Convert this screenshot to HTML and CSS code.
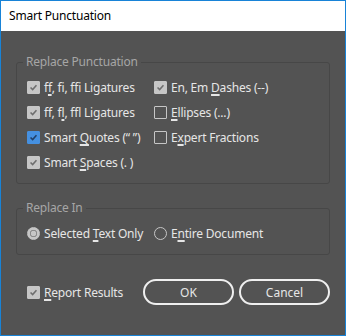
FILE: index.html
```html
<!DOCTYPE html>
<html lang="en">
<head>
  <meta charset="UTF-8" />
  <title>Smart Punctuation</title>
  <link rel="stylesheet" href="styles.css">
</head>
<body>
  <div class="window">
    <div class="titlebar">Smart Punctuation</div>
    <div class="content">
      <fieldset class="group">
        <legend>Replace Punctuation</legend>
        <div class="opts">
          <div class="opt"><span class="box on"><svg viewBox="0 0 13 13"><path d="M3 6.5 L5.5 9 L10 3.8"/></svg></span><span>f<u>f</u>, fi, ffi Ligatures</span></div>
          <div class="opt"><span class="box on"><svg viewBox="0 0 13 13"><path d="M3 6.5 L5.5 9 L10 3.8"/></svg></span><span>En, Em <u>D</u>ashes (--)</span></div>
          <div class="opt"><span class="box on"><svg viewBox="0 0 13 13"><path d="M3 6.5 L5.5 9 L10 3.8"/></svg></span><span>ff, f<u>l</u>, ffl Ligatures</span></div>
          <div class="opt"><span class="box"></span><span><u>E</u>llipses (...)</span></div>
          <div class="opt"><span class="box blue"><svg viewBox="0 0 13 13"><path d="M3 6.5 L5.5 9 L10 3.8"/></svg></span><span>Smart <u>Q</u>uotes (“ ”)</span></div>
          <div class="opt"><span class="box"></span><span>E<u>x</u>pert Fractions</span></div>
          <div class="opt"><span class="box on"><svg viewBox="0 0 13 13"><path d="M3 6.5 L5.5 9 L10 3.8"/></svg></span><span>Smart <u>S</u>paces (. )</span></div>
        </div>
      </fieldset>

      <fieldset class="group">
        <legend>Replace In</legend>
        <div class="opts radios">
          <div class="opt"><span class="radio sel"></span><span>Selected <u>T</u>ext Only</span></div>
          <div class="opt"><span class="radio"></span><span>E<u>n</u>tire Document</span></div>
        </div>
      </fieldset>

      <div class="footer">
        <div class="opt"><span class="box on"><svg viewBox="0 0 13 13"><path d="M3 6.5 L5.5 9 L10 3.8"/></svg></span><span><u>R</u>eport Results</span></div>
        <div class="buttons">
          <button class="btn">OK</button>
          <button class="btn">Cancel</button>
        </div>
      </div>
    </div>
  </div>
</body>
</html>
```

FILE: styles.css
```css
body {
  margin: 0;
  font-family: "Noto Sans", "Open Sans", sans-serif;
  font-size: 12px;
  letter-spacing: -0.2px;
}
.window {
  width: 346px;
  height: 336px;
  box-sizing: border-box;
  border: 1px solid #1883d7;
  background: #535353;
  display: flex;
  flex-direction: column;
}
.titlebar {
  height: 30px;
  background: #fff;
  color: #000;
  line-height: 30px;
  padding-left: 8px;
}
.content {
  padding: 23px 15px 0;
  color: #e6e6e6;
}
.group {
  margin: 0 0 16px;
  border: 1px solid #474747;
  border-radius: 3px;
  padding: 5px 10px 8px;
}
.group legend {
  color: #a6a6a6;
  padding: 0 3px;
  margin-left: -4px;
  line-height: 16px;
}
.opts {
  display: grid;
  grid-template-columns: 127px auto;
  grid-auto-rows: 25px;
}
.opt {
  display: flex;
  align-items: center;
  white-space: nowrap;
}
.opt u {
  text-decoration-thickness: 2px;
  text-underline-offset: 2px;
}
.box, .radio {
  width: 13px;
  height: 13px;
  box-sizing: border-box;
  margin-right: 4px;
  flex: none;
}
.box {
  border: 1px solid #c6c6c6;
  border-radius: 1px;
}
.box svg {
  display: block;
  width: 11px;
  height: 11px;
}
.box path {
  fill: none;
  stroke: #6e6e6e;
  stroke-width: 1.8;
}
.box.on {
  background: #c6c6c6;
}
.box.blue {
  background: #4590e0;
  border-color: #4590e0;
}
.box.blue path {
  stroke: #213f66;
}
.radio {
  border: 1px solid #c6c6c6;
  border-radius: 50%;
}
.radio.sel {
  background: radial-gradient(circle, #c6c6c6 0 2.5px, #8a8a8a 3px 3.5px, #c6c6c6 4px);
}
.footer {
  display: flex;
  align-items: center;
  justify-content: space-between;
  padding-left: 11px;
  margin-top: 24px;
}
.buttons {
  display: flex;
  gap: 5px;
}
.btn {
  width: 91px;
  height: 26px;
  border: 2px solid #efefef;
  border-radius: 13px;
  background: transparent;
  color: #e6e6e6;
  font: inherit;
  padding: 0;
}
```
